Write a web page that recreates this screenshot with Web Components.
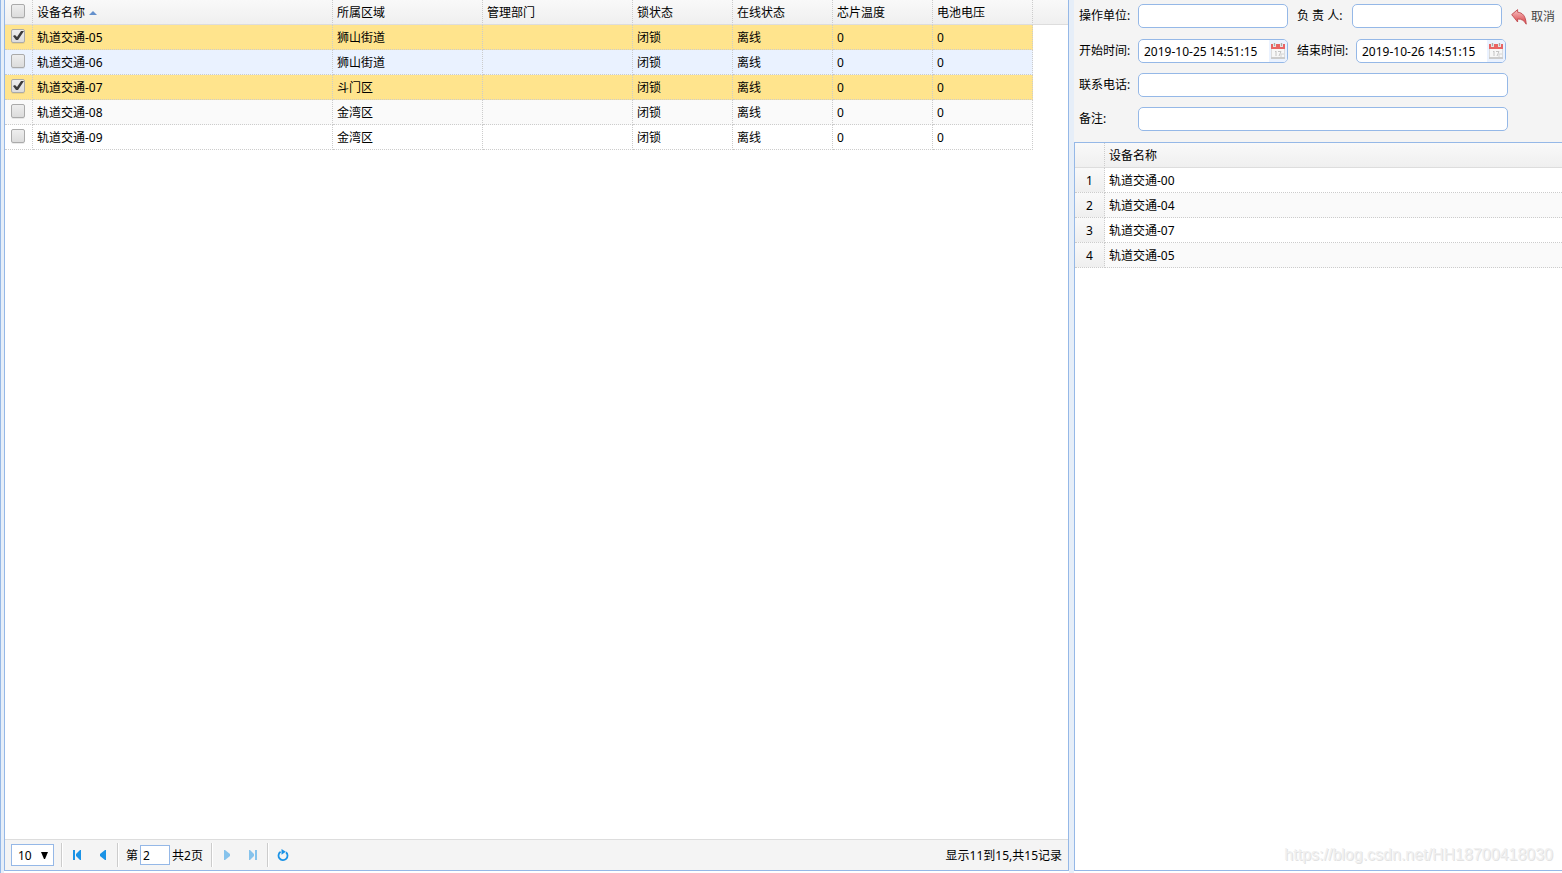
<!DOCTYPE html>
<html lang="zh-CN">
<head>
<meta charset="utf-8">
<title>设备操作</title>
<style>
html, body { height: 100%; margin: 0; }
body { background: #fff; color: #000; font: 12px/16px "Noto Sans", "Noto Sans CJK SC", sans-serif; overflow: hidden; }
</style>
</head>
<body>
<split-layout>
  <device-grid slot="main"></device-grid>
  <grid-pager slot="pager"></grid-pager>
  <operation-form slot="form"></operation-form>
  <chosen-devices slot="side"></chosen-devices>
  <span slot="mark">https://blog.csdn.net/HH18700418030</span>
</split-layout>

<script>
const define = (name, render) => customElements.define(name, class extends HTMLElement {
  connectedCallback() {
    if (this.shadowRoot) return;
    this.attachShadow({ mode: 'open' }).innerHTML = render(this);
  }
});

const tableStyle = `
  table { width: 100%; table-layout: fixed; border-collapse: separate; border-spacing: 0; }
  th, td { box-sizing: border-box; height: 25px; padding: 2px 4px 0; border: 0 dotted #ccc; border-width: 0 1px 1px 0;
    text-align: left; font-weight: normal; white-space: nowrap; overflow: hidden; }
  thead tr { background: linear-gradient(#f9f9f9, #efefef); }
  th { border-bottom: 1px solid #ddd; }
  tbody tr:nth-child(even) { background: #fafafa; }
`;

define('split-layout', () => `
  <style>
    :host { display: flex; box-sizing: border-box; height: 100vh; border-left: 1px solid #95b8e7; }
    .gutter { flex: none; width: 3px; background: #e6eef8; }
    .gutter.wide { width: 5px; }
    section { display: flex; flex-direction: column; box-sizing: border-box; margin-bottom: 2px; min-width: 0; }
    .left { flex: 1063 1 0; border: 1px solid #95b8e7; border-top: 0; }
    .right { flex: 488 1 0; position: relative; }
    .fill { flex: 1; min-height: 0; }
    .box { border: 1px solid #95b8e7; border-right: 0; }
    ::slotted([slot=mark]) { position: absolute; right: 9px; bottom: 7px; font: 16px/18px "Liberation Sans", sans-serif;
      color: #f0f0f0; text-shadow: 1px 1px 0 #e2e2e2; pointer-events: none; }
  </style>
  <div class="gutter"></div>
  <section class="left"><div class="fill"><slot name="main"></slot></div><slot name="pager"></slot></section>
  <div class="gutter wide"></div>
  <section class="right"><slot name="form"></slot><div class="fill box"><slot name="side"></slot></div><slot name="mark"></slot></section>
`);

define('check-box', host => `
  <style>
    :host { display: block; width: 14px; height: 14px; margin: 0 auto 2px; }
    input { appearance: none; display: block; box-sizing: border-box; width: 14px; height: 14px; margin: 0;
      border: 1px solid #aaa; border-radius: 2px; background: linear-gradient(#eee, #dcdcdc); box-shadow: 0 1px 0 rgba(0,0,0,.08); }
    input:checked::before { content: ""; display: block; width: 12px; height: 12px; background: #3c3c3c;
      clip-path: polygon(1px 6px, 3px 5px, 5px 7px, 9px 1px, 12px 1px, 6px 10px, 4px 10px); }
  </style>
  <input type="checkbox" aria-label="${host.getAttribute('label')}" ${host.hasAttribute('checked') ? 'checked' : ''}>
`);

const devices = [
  ['轨道交通-05', '狮山街道', 'picked'],
  ['轨道交通-06', '狮山街道', 'hover'],
  ['轨道交通-07', '斗门区', 'picked'],
  ['轨道交通-08', '金湾区', ''],
  ['轨道交通-09', '金湾区', '']
];

define('device-grid', () => `
  <style>
    :host { display: block; }
    ${tableStyle}
    .c0 { width: 28px; } .c1 { width: 300px; } .c2 { width: 150px; } .c3 { width: 100px; }
    th:first-child, td:first-child { padding: 0 1px 0 0; }
    th:last-child { border-right: 0; }
    td:last-child { border: 0; background: #fff; }
    tbody tr.hover { background: #eaf2ff; }
    tbody tr.picked { background: #ffe48d; }
    svg { margin: 0 0 2px 4px; }
  </style>
  <table>
    <colgroup><col class="c0"><col class="c1"><col class="c2"><col class="c2"><col class="c3"><col class="c3"><col class="c3"><col class="c3"><col></colgroup>
    <thead><tr><th><check-box label="全选"></check-box></th>
      <th>设备名称<svg width="8" height="4"><path d="M0 4L4 0l4 4z" fill="#6490cc"/></svg></th>
      <th>所属区域</th><th>管理部门</th><th>锁状态</th><th>在线状态</th><th>芯片温度</th><th>电池电压</th><th></th></tr></thead>
    <tbody>${devices.map(([name, area, state]) => `<tr class="${state}">
      <td><check-box label="${name}" ${state === 'picked' ? 'checked' : ''}></check-box></td>
      <td>${name}</td><td>${area}</td><td></td><td>闭锁</td><td>离线</td><td>0</td><td>0</td><td></td></tr>`).join('')}</tbody>
  </table>
`);

define('chosen-devices', () => `
  <style>
    :host { display: block; }
    ${tableStyle}
    .num { width: 30px; }
    th:first-child, td:first-child { padding: 2px 0 0; text-align: center; }
    td:first-child { background: linear-gradient(#f9f9f9, #efefef); }
    th:last-child, td:last-child { border-right: 0; }
  </style>
  <table>
    <colgroup><col class="num"><col></colgroup>
    <thead><tr><th></th><th>设备名称</th></tr></thead>
    <tbody>${['00', '04', '07', '05'].map((n, i) => `<tr><td>${i + 1}</td><td>轨道交通-${n}</td></tr>`).join('')}</tbody>
  </table>
`);

const pagerIcons = {
  first: '<path d="M2 1h2v10H2zM10 1v10H9L5 7V5l4-4z"/>',
  prev: '<path d="M9 1v10H8L3 7V5l5-4z"/>',
  next: '<path d="M3 1v10h1l5-4V5L4 1z"/>',
  last: '<path d="M8 1h2v10H8zM2 1v10h1l4-4V5L3 1z"/>',
  refresh: '<path d="M3.600 2.800A4.500 4.500 0 1 0 9 3.200" fill="none" stroke="currentColor" stroke-width="1.800"/><path d="M4.500 0l4.300 2.700-4.300 3z"/>'
};

define('pager-button', host => `
  <style>
    :host { display: block; }
    button { display: grid; place-items: center; width: 26px; height: 26px; padding: 0; border: 0; background: none; color: #1b93e6; }
    button:disabled { opacity: .5; }
  </style>
  <button type="button" aria-label="${host.getAttribute('label')}" ${host.hasAttribute('off') ? 'disabled' : ''}>
    <svg width="12" height="12" fill="currentColor">${pagerIcons[host.getAttribute('icon')]}</svg></button>
`);

define('grid-pager', () => `
  <style>
    :host { display: flex; align-items: center; box-sizing: border-box; height: 31px; padding: 0 6px; border-top: 1px solid #ddd; background: #f4f4f4; white-space: nowrap; }
    .size { display: grid; align-items: center; margin-right: 6px; }
    .size > * { grid-area: 1 / 1; }
    .size svg { justify-self: end; margin-right: 6px; pointer-events: none; }
    select, input { appearance: none; box-sizing: border-box; margin: 0; border: 1px solid #95b8e7; border-radius: 0; background: #fff; color: #000; font: inherit; }
    select { width: 43px; height: 22px; padding: 2px 0 0 6px; }
    input { width: 30px; height: 20px; padding: 1px 2px 0; margin: 0 2px; }
    hr { flex: none; width: 1px; height: 24px; margin: 0 1px; border: 0; border-left: 1px solid #ccc; background: #fff; }
    .page { display: flex; align-items: center; padding: 0 7px 0 6px; }
    label, span, output { padding-top: 2px; }
    output { margin-left: auto; }
  </style>
  <div class="size"><select aria-label="每页记录数"><option>10</option></select>
    <svg width="7" height="7"><path d="M0 0h7L4 7H3z"/></svg></div>
  <hr>
  <pager-button icon="first" label="首页"></pager-button>
  <pager-button icon="prev" label="上一页"></pager-button>
  <hr>
  <div class="page"><label for="page">第</label><input id="page" value="2"><span>共2页</span></div>
  <hr>
  <pager-button icon="next" label="下一页" off></pager-button>
  <pager-button icon="last" label="末页" off></pager-button>
  <hr>
  <pager-button icon="refresh" label="刷新"></pager-button>
  <output>显示11到15,共15记录</output>
`);

define('form-field', host => `
  <style>
    :host { display: flex; align-items: flex-start; }
    label { flex: none; width: 59px; padding-top: 4px; white-space: nowrap; }
    :host([short]) label { width: 55px; }
    .box { display: flex; box-sizing: border-box; width: 150px; height: 24px; border: 1px solid #95b8e7; border-radius: 5px; background: #fff; overflow: hidden; }
    :host([wide]) .box { width: 370px; }
    input { flex: 1; min-width: 0; padding: 2px 0 0 5px; border: 0; outline: 0; background: none; color: #000; font: inherit; }
    button { flex: none; display: grid; place-items: center; width: 18px; padding: 0; border: 0; background: #eaf2ff; }
  </style>
  <label for="field">${host.getAttribute('label')}</label>
  <div class="box"><input id="field" value="${host.getAttribute('value') || ''}">
  ${host.hasAttribute('date') ? `<button type="button" aria-label="选择日期"><svg width="16" height="16">
      <path d="M1.500 1.500h13v13h-13z" fill="#f7f7f7" stroke="#dcdcdc"/><path d="M1 14h14v2H1z" fill="#ccc"/>
      <path d="M1 1h14v5H1z" fill="#e86464"/>
      <path d="M3 0h3v4H3zM10 0h3v4h-3z" fill="#e4e4e4"/><path d="M4 0h1v3H4zM11 0h1v3h-1z" fill="#aaa"/>
      <path d="M5 9l1-1v5M8 8.500h3L9 13" fill="none" stroke="#c4c4c4"/><path d="M11 14v-3h3" fill="none" stroke="#d4d4d4"/>
    </svg></button>` : ''}</div>
`);

define('operation-form', () => `
  <style>
    :host { display: block; background: #f4f4f4; }
    form { display: flex; flex-direction: column; gap: 10px; padding: 4px 5px 11px; }
    .row { display: flex; gap: 9px; }
    .cancel { display: flex; align-items: center; gap: 4px; height: 25px; padding: 0; border: 0; background: none; color: #444; font: inherit; white-space: nowrap; }
  </style>
  <form>
    <div class="row">
      <form-field label="操作单位:"></form-field>
      <form-field short label="负 责 人:"></form-field>
      <button class="cancel" type="button"><svg width="16" height="16">
        <defs><linearGradient id="red" x2="0" y2="1"><stop stop-color="#f7c4c4"/><stop offset="1" stop-color="#d83a40"/></linearGradient></defs>
        <path d="M.7 5.600L6.600.600v2.600c4.800.400 8.200 3.600 8.600 12-1.800-3.400-4.400-5.400-8.600-5.200v3z" fill="url(#red)" stroke="#c04a4e" stroke-width=".9" stroke-linejoin="round"/>
      </svg>取消</button>
    </div>
    <div class="row">
      <form-field date label="开始时间:" value="2019-10-25 14:51:15"></form-field>
      <form-field date label="结束时间:" value="2019-10-26 14:51:15"></form-field>
    </div>
    <form-field wide label="联系电话:"></form-field>
    <form-field wide label="备注:"></form-field>
  </form>
`);
</script>
</body>
</html>
